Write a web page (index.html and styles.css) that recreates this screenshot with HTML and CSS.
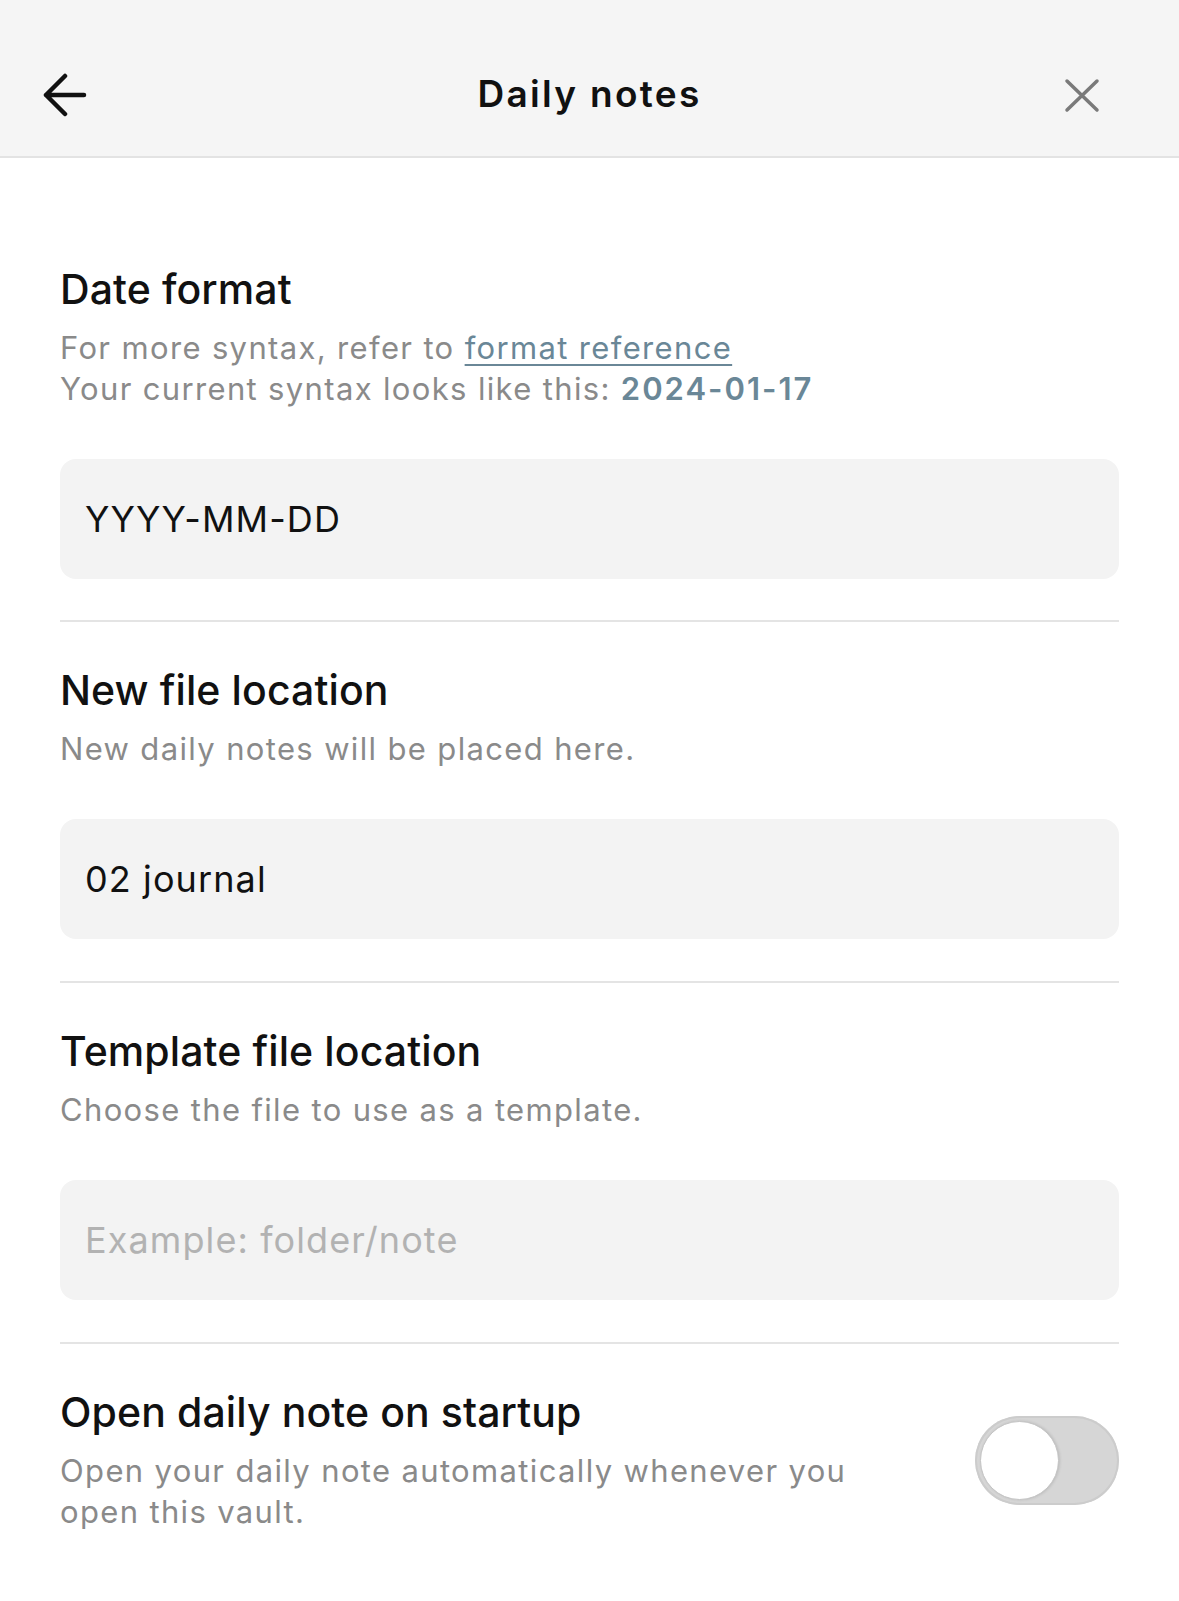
FILE: index.html
```html
<!DOCTYPE html>
<html lang="en">
<head>
<meta charset="utf-8">
<title>Daily notes</title>
<link rel="stylesheet" href="styles.css">
</head>
<body>
<header class="topbar">
  <div class="topbar-left">
    <svg class="icon-back" width="50" height="46" viewBox="0 0 50 46" aria-hidden="true">
      <path d="M8 22 H46 M27 3 L8 22 L27 41" fill="none" stroke="#111" stroke-width="4.5" stroke-linecap="round" stroke-linejoin="round"/>
    </svg>
  </div>
  <h1 class="topbar-title">Daily notes</h1>
  <div class="topbar-right">
    <svg class="icon-close" width="46" height="46" viewBox="0 0 46 46" aria-hidden="true">
      <path d="M8 8 L38 37 M38 8 L8 37" fill="none" stroke="#7a7a7a" stroke-width="3.5" stroke-linecap="round"/>
    </svg>
  </div>
</header>

<main class="content">
  <section class="setting">
    <h2 class="setting-name">Date format</h2>
    <p class="setting-desc">For more syntax, refer to <a class="link" href="#">format reference</a><br>Your current syntax looks like this: <b class="accent">2024-01-17</b></p>
    <div class="field"><span class="field-value">YYYY-MM-DD</span></div>
  </section>

  <section class="setting">
    <h2 class="setting-name">New file location</h2>
    <p class="setting-desc">New daily notes will be placed here.</p>
    <div class="field"><span class="field-value">02 journal</span></div>
  </section>

  <section class="setting">
    <h2 class="setting-name">Template file location</h2>
    <p class="setting-desc">Choose the file to use as a template.</p>
    <div class="field"><span class="field-placeholder">Example: folder/note</span></div>
  </section>

  <section class="setting setting-row">
    <div class="setting-info">
      <h2 class="setting-name">Open daily note on startup</h2>
      <p class="setting-desc">Open your daily note automatically whenever you open this vault.</p>
    </div>
    <div class="toggle"><div class="toggle-knob"></div></div>
  </section>
</main>
</body>
</html>
```

FILE: styles.css
```css
html, body {
  margin: 0;
  padding: 0;
  background: #ffffff;
}

body {
  font-family: Inter, "Noto Sans", "Liberation Sans", sans-serif;
  color: #111111;
  width: 1179px;
}

.topbar {
  box-sizing: border-box;
  height: 158px;
  padding-top: 32px;
  background: #f5f5f5;
  border-bottom: 2px solid #e3e3e3;
  display: grid;
  grid-template-columns: 1fr auto 1fr;
  align-items: center;
}

.topbar-left {
  padding-left: 38px;
  display: flex;
  align-items: center;
}

.topbar-right {
  display: flex;
  justify-content: flex-end;
  padding-right: 74px;
}

.icon-back, .icon-close {
  display: block;
  margin-top: 4px;
}

.topbar-title {
  margin: 0;
  font-size: 37px;
  font-weight: 600;
  letter-spacing: 2.3px;
  line-height: 48px;
  color: #111111;
}

.content {
  padding: 62px 60px 0 60px;
}

.setting {
  padding: 44px 0 42px 0;
  border-bottom: 2px solid #e4e4e4;
}

.setting:first-child {
  padding-top: 45px;
  padding-bottom: 41px;
}

.setting:last-child {
  border-bottom: none;
}

.setting-name {
  margin: 0;
  font-size: 41px;
  font-weight: 500;
  letter-spacing: 0.1px;
  line-height: 48px;
  color: #111111;
}

.setting-desc {
  margin: 14px 0 0 0;
  font-size: 31px;
  line-height: 41px;
  letter-spacing: 1.35px;
  color: #8a8a8a;
}

.link {
  color: #6a8797;
  text-decoration: underline;
  text-decoration-thickness: 2px;
  text-underline-offset: 5px;
}

.accent {
  color: #6a8797;
  font-weight: 600;
  letter-spacing: 2px;
}

.field {
  margin-top: 50px;
  height: 120px;
  box-sizing: border-box;
  border-radius: 16px;
  background: #f3f3f3;
  padding-left: 25px;
  display: flex;
  align-items: center;
  font-size: 36px;
  letter-spacing: 1.1px;
}

.field-value {
  color: #111111;
}

.field-placeholder {
  color: #b2b2b2;
}

.setting-row {
  display: flex;
  align-items: center;
  justify-content: space-between;
}

.setting-info {
  width: 820px;
}

.toggle {
  position: relative;
  width: 144px;
  height: 89px;
  border-radius: 45px;
  background: #d6d6d6;
  box-shadow: inset 0 0 0 2px #cccccc;
  flex-shrink: 0;
}

.toggle-knob {
  position: absolute;
  left: 5px;
  top: 5px;
  width: 79px;
  height: 79px;
  box-sizing: border-box;
  border-radius: 50%;
  background: #ffffff;
  border: 1px solid #c4c4c4;
  box-shadow: 1px 0 3px rgba(0, 0, 0, 0.12);
}
```
